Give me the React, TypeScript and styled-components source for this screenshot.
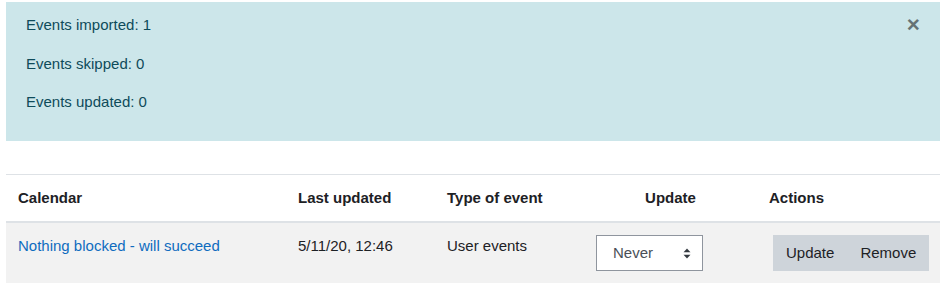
import React from "react";
import styled, { createGlobalStyle } from "styled-components";

const GlobalStyle = createGlobalStyle`
  body {
    margin: 0;
    background: #fff;
    font-family: "Liberation Sans", Arial, sans-serif;
    font-size: 15px;
    line-height: 1.5;
    color: #1d2125;
  }
`;

const stats = [
  { label: "Events imported", value: 1 },
  { label: "Events skipped", value: 0 },
  { label: "Events updated", value: 0 },
];

const columns = [
  { title: "Calendar", width: 280, align: "left" },
  { title: "Last updated", width: 149, align: "left" },
  { title: "Type of event", width: 149, align: "left" },
  { title: "Update", width: 173, align: "center" },
  { title: "Actions", width: 183, align: "left" },
];

export default function App() {
  return (
    <Page>
      <GlobalStyle />
      <Alert role="alert">
        {stats.map((s) => (
          <AlertLine key={s.label}>
            {s.label}: {s.value}
          </AlertLine>
        ))}
        <CloseButton type="button" aria-label="Close">
          ×
        </CloseButton>
      </Alert>

      <Table>
        <thead>
          <tr>
            {columns.map((c) => (
              <Th key={c.title} $width={c.width} $align={c.align}>
                {c.title}
              </Th>
            ))}
          </tr>
        </thead>
        <tbody>
          <tr>
            <Td>
              <Link href="#">Nothing blocked - will succeed</Link>
            </Td>
            <Td>5/11/20, 12:46</Td>
            <Td>User events</Td>
            <Td>
              <SelectBox>
                <span>Never</span>
                <svg width="8" height="11" viewBox="0 0 8 11">
                  <path d="M4 0.5 L7.5 4.2 H0.5 Z" fill="#343a40" />
                  <path d="M4 10.5 L7.5 6.8 H0.5 Z" fill="#343a40" />
                </svg>
              </SelectBox>
            </Td>
            <Td>
              <ButtonGroup>
                <Button type="button">Update</Button>
                <Button type="button">Remove</Button>
              </ButtonGroup>
            </Td>
          </tr>
        </tbody>
      </Table>
    </Page>
  );
}

const Page = styled.div`
  padding: 2px 12px 0 6px;
  width: 934px;
`;

const Alert = styled.div`
  position: relative;
  background: #cce6ea;
  color: #0e4b5a;
  padding: 12px 20px 11px;
  margin-bottom: 33px;
`;

const AlertLine = styled.p`
  margin: 0 0 16px;
`;

const CloseButton = styled.button`
  position: absolute;
  top: 0;
  right: 0;
  padding: 6px 20px;
  border: 0;
  background: transparent;
  font-family: "Liberation Sans", Arial, sans-serif;
  font-size: 22.5px;
  font-weight: bold;
  line-height: 1.5;
  color: #000;
  opacity: 0.5;
  cursor: pointer;
`;

const Table = styled.table`
  width: 934px;
  border-collapse: collapse;
  table-layout: fixed;
`;

const Th = styled.th<{ $width: number; $align: string }>`
  box-sizing: border-box;
  width: ${(p) => p.$width}px;
  text-align: ${(p) => p.$align};
  padding: 12px;
  font-weight: bold;
  border-top: 1px solid #dee2e6;
  border-bottom: 2px solid #dee2e6;
  vertical-align: bottom;
`;

const Td = styled.td`
  padding: 12px;
  background: #f2f2f2;
  vertical-align: top;
`;

const Link = styled.a`
  color: #0f6cbf;
  text-decoration: none;
`;

const SelectBox = styled.div`
  box-sizing: border-box;
  width: 107px;
  height: 36px;
  display: flex;
  align-items: center;
  justify-content: space-between;
  padding: 0 11px 0 16px;
  background: #fff;
  border: 1px solid #8f959e;
  color: #495057;
`;

const ButtonGroup = styled.div`
  display: inline-flex;
  margin-left: 4px;
`;

const Button = styled.button`
  height: 36px;
  padding: 0 13px;
  border: 0;
  background: #ced4da;
  color: #1d2125;
  font-family: "Liberation Sans", Arial, sans-serif;
  font-size: 15px;
  line-height: 1.5;
  cursor: pointer;
`;
